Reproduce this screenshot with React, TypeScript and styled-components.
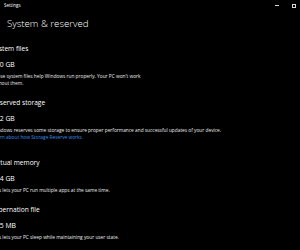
import styled, { createGlobalStyle } from "styled-components";

const GlobalStyle = createGlobalStyle`
    html, body {
        margin: 0;
        padding: 0;
        background: #000;
        overflow: hidden;
    }
    body {
        font-family: "Open Sans", "Noto Sans", "Liberation Sans", sans-serif;
        color: #fff;
    }
`;

const Window = styled.div`
    width: 300px;
    height: 250px;
    background: #000;
    overflow: hidden;
    display: flex;
    flex-direction: column;
`;

const TitleBar = styled.div`
    height: 11px;
    flex-shrink: 0;
    display: flex;
    align-items: center;
    justify-content: space-between;
    padding-left: 4px;
`;

const AppName = styled.span`
    font-size: 4.5px;
    line-height: 11px;
    color: #fff;
`;

const Controls = styled.div`
    display: flex;
    align-items: center;
    gap: 13px;
    margin-right: 4px;
`;

const Minimize = styled.span`
    width: 4px;
    height: 1px;
    background: #d8d8d8;
`;

const Maximize = styled.span`
    width: 2px;
    height: 2px;
    border: 1px solid #d8d8d8;
`;

const PageTitle = styled.h1`
    margin: 5.2px 0 0 7px;
    font-size: 9.7px;
    font-weight: 300;
    line-height: 16px;
    flex-shrink: 0;
`;

const Content = styled.div`
    margin-left: -8px;
    padding-top: 12.2px;
    display: flex;
    flex-direction: column;
    gap: 11.5px;
`;

const Section = styled.section`
    display: flex;
    flex-direction: column;
`;

const Heading = styled.h2`
    margin: 0;
    font-size: 6.6px;
    font-weight: 400;
    line-height: 10px;
`;

const Size = styled.div`
    margin-top: 6px;
    font-size: 6.8px;
    line-height: 10px;
`;

const Description = styled.p<{ $width: number }>`
    margin: 2.5px 0 0;
    width: ${(p) => p.$width}px;
    font-size: 4.8px;
    line-height: 7px;
    color: #ececec;
`;

const Link = styled.a`
    margin: 0.5px 0 5.5px;
    font-size: 4.8px;
    line-height: 7px;
    color: #3d8de4;
    text-decoration: none;
`;

type Item = {
    title: string;
    size: string;
    text: string;
    width: number;
    link?: string;
};

const items: Item[] = [
    {
        title: "System files",
        size: "150 GB",
        text: "These system files help Windows run properly. Your PC won't work without them.",
        width: 156,
    },
    {
        title: "Reserved storage",
        size: "112 GB",
        text: "Windows reserves some storage to ensure proper performance and successful updates of your device.",
        width: 280,
        link: "Learn about how Storage Reserve works",
    },
    {
        title: "Virtual memory",
        size: "164 GB",
        text: "This lets your PC run multiple apps at the same time.",
        width: 280,
    },
    {
        title: "Hibernation file",
        size: "625 MB",
        text: "This lets your PC sleep while maintaining your user state.",
        width: 280,
    },
];

const App = () => {
    return (
        <Window>
            <GlobalStyle />
            <TitleBar>
                <AppName>Settings</AppName>
                <Controls>
                    <Minimize />
                    <Maximize />
                </Controls>
            </TitleBar>
            <PageTitle>System &amp; reserved</PageTitle>
            <Content>
                {items.map((item) => (
                    <Section key={item.title}>
                        <Heading>{item.title}</Heading>
                        <Size>{item.size}</Size>
                        <Description $width={item.width}>{item.text}</Description>
                        {item.link && <Link href="#">{item.link}</Link>}
                    </Section>
                ))}
            </Content>
        </Window>
    );
};

export default App;
